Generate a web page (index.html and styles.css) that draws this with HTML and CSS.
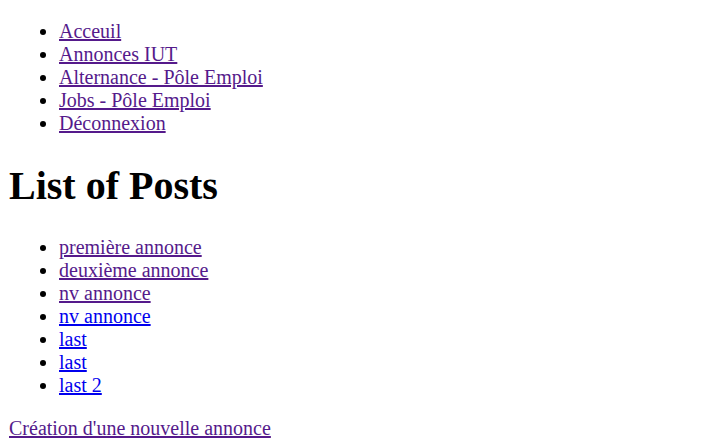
FILE: index.html
```html
<!DOCTYPE html>
<html lang="fr">
<head>
<meta charset="utf-8">
<title>List of Posts</title>
<link rel="stylesheet" href="styles.css">
</head>
<body>
<ul class="list">
  <li><a class="link visited" href="#">Acceuil</a></li>
  <li><a class="link visited" href="#">Annonces IUT</a></li>
  <li><a class="link visited" href="#">Alternance - Pôle Emploi</a></li>
  <li><a class="link visited" href="#">Jobs - Pôle Emploi</a></li>
  <li><a class="link visited" href="#">Déconnexion</a></li>
</ul>
<h1 class="title">List of Posts</h1>
<ul class="list">
  <li><a class="link visited" href="#">première annonce</a></li>
  <li><a class="link visited" href="#">deuxième annonce</a></li>
  <li><a class="link visited" href="#">nv annonce</a></li>
  <li><a class="link fresh" href="#">nv annonce</a></li>
  <li><a class="link fresh" href="#">last</a></li>
  <li><a class="link fresh" href="#">last</a></li>
  <li><a class="link fresh" href="#">last 2</a></li>
</ul>
<p class="para"><a class="link visited" href="#">Création d'une nouvelle annonce</a></p>
</body>
</html>
```
FILE: styles.css
```css
html {
  margin: 0;
  padding: 0;
}
body {
  margin: 0 9px 8px;
  font-family: "Liberation Serif", "Times New Roman", serif;
  font-size: 20px;
  color: #000;
  background: #fff;
}
.list {
  margin: 20px 0;
  padding-left: 50px;
  list-style: disc;
}
.title {
  font-size: 40px;
  font-weight: bold;
  margin: 26.8px 0;
}
.para {
  margin: 20px 0;
}
.link {
  text-decoration: underline;
}
.visited {
  color: #551a8b;
}
.fresh {
  color: #0000ee;
}
```
